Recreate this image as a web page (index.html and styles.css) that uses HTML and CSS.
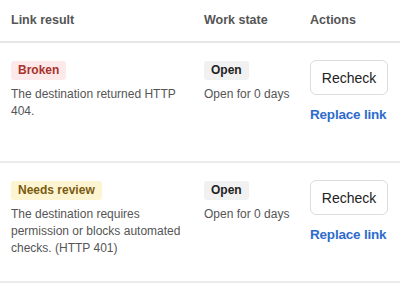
FILE: index.html
```html
<!DOCTYPE html>
<html>

<head>
  <title>Link checks</title>
  <meta charset="UTF-8">
  <link rel="stylesheet" href="styles.css">
</head>

<body>
  <table class="linkTable">
    <colgroup>
      <col class="colResult">
      <col class="colState">
      <col class="colActions">
    </colgroup>
    <thead>
      <tr>
        <th>Link result</th>
        <th>Work state</th>
        <th>Actions</th>
      </tr>
    </thead>
    <tbody>
      <tr>
        <td>
          <span class="badge badgeBroken">Broken</span>
          <p class="detail">The destination returned HTTP 404.</p>
        </td>
        <td>
          <span class="badge badgeOpen">Open</span>
          <p class="detail noWrap">Open for 0 days</p>
        </td>
        <td>
          <div class="actions">
            <button class="buttonRecheck">Recheck</button>
            <a class="replaceLink" href="#">Replace link</a>
          </div>
        </td>
      </tr>
      <tr>
        <td>
          <span class="badge badgeReview">Needs review</span>
          <p class="detail">The destination requires permission or blocks automated checks. (HTTP 401)</p>
        </td>
        <td>
          <span class="badge badgeOpen">Open</span>
          <p class="detail noWrap">Open for 0 days</p>
        </td>
        <td>
          <div class="actions">
            <button class="buttonRecheck">Recheck</button>
            <a class="replaceLink" href="#">Replace link</a>
          </div>
        </td>
      </tr>
    </tbody>
  </table>
</body>

</html>
```

FILE: styles.css
```css
body {
  margin: 0;
  background: #fff;
  font-family: "Liberation Sans", Arial, sans-serif;
  color: #555;
}

table.linkTable {
  width: 400px;
  border-collapse: collapse;
  table-layout: fixed;
}

col.colResult {
  width: 193px;
}

col.colState {
  width: 106px;
}

.linkTable th {
  text-align: left;
  font-size: 12.5px;
  font-weight: 600;
  color: #555;
  padding: 10px 11px 11px 11px;
  line-height: 20px;
  border-bottom: 2px solid #e6e6e6;
}

.linkTable td {
  vertical-align: top;
  padding: 17px 11px 0 11px;
  height: 101px;
  border-bottom: 2px solid #ebebeb;
}

.badge {
  display: inline-block;
  font-size: 12px;
  font-weight: 600;
  line-height: 19px;
  padding: 0 7px;
  border-radius: 3px;
}

.badgeBroken {
  background: #fde9e9;
  color: #a8322d;
}

.badgeReview {
  background: #fdf5d2;
  color: #7a5a10;
}

.badgeOpen {
  background: #f1f1f1;
  color: #222;
}

.detail {
  margin: 6px 0 0 0;
  font-size: 12px;
  line-height: 17px;
  color: #555;
}

.noWrap {
  white-space: nowrap;
}

.actions {
  display: flex;
  flex-direction: column;
  align-items: flex-start;
  gap: 12px;
}

.buttonRecheck {
  width: 78px;
  height: 35px;
  font-family: inherit;
  font-size: 14px;
  color: #222;
  background: #fff;
  border: 1px solid #dcdcdc;
  border-radius: 6px;
}

.replaceLink {
  font-size: 13.5px;
  font-weight: 600;
  letter-spacing: -0.2px;
  color: #2f6bcc;
  text-decoration: none;
  white-space: nowrap;
}
```
